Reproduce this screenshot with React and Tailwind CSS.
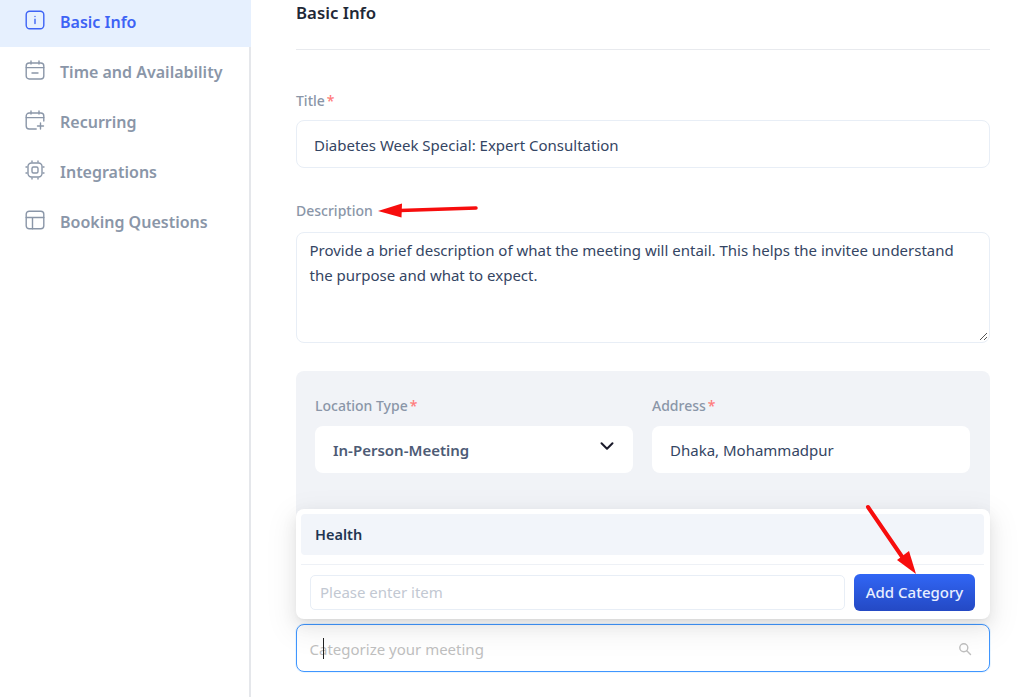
import React from 'react';
import { ChevronDown } from 'lucide-react';

const InfoIcon = () => (
  <svg width="20" height="20" viewBox="0 0 20 20" fill="none" stroke="currentColor" strokeWidth="1.4" strokeLinecap="round">
    <rect x="1.2" y="1.2" width="17.6" height="17.6" rx="3.5" />
    <path d="M10 9.2v4.4M10 6.4v.2" />
  </svg>
);

const CalendarMinusIcon = () => (
  <svg width="20" height="20" viewBox="0 0 20 20" fill="none" stroke="currentColor" strokeWidth="1.4" strokeLinecap="round">
    <rect x="1.2" y="3" width="17.6" height="16" rx="3" />
    <path d="M1.2 7.6h17.6M6 1v3M14 1v3M7 13h6" />
  </svg>
);

const CalendarPlusIcon = () => (
  <svg width="20" height="20" viewBox="0 0 20 20" fill="none" stroke="currentColor" strokeWidth="1.4" strokeLinecap="round">
    <path d="M18.8 11V6a3 3 0 0 0-3-3H4.200a3 3 0 0 0-3 3v10a3 3 0 0 0 3 3h7" />
    <path d="M1.200 7.600h17.600M6 1v3M14 1v3M15.500 13v6M12.500 16h6" />
  </svg>
);

const ChipIcon = () => (
  <svg width="20" height="20" viewBox="0 0 20 20" fill="none" stroke="currentColor" strokeWidth="1.4" strokeLinecap="round">
    <rect x="3" y="3" width="14" height="14" rx="3.5" />
    <rect x="7" y="7" width="6" height="6" rx="1.5" />
    <path d="M7 1v1M13 1v1M7 18v1M13 18v1M1 7h1M1 13h1M18 7h1M18 13h1" />
  </svg>
);

const LayoutIcon = () => (
  <svg width="20" height="20" viewBox="0 0 20 20" fill="none" stroke="currentColor" strokeWidth="1.4" strokeLinecap="round">
    <rect x="1.2" y="1.2" width="17.600" height="17.600" rx="3" />
    <path d="M1.200 7.500h17.600M7.500 7.500v11.300" />
  </svg>
);

const SearchIcon = () => (
  <svg width="14" height="14" viewBox="0 0 14 14" fill="none" stroke="#bfbfbf" strokeWidth="1.400" strokeLinecap="round">
    <circle cx="5.800" cy="5.800" r="4" />
    <path d="M8.800 8.800l3.700 3.700" />
  </svg>
);

const navItems = [
  { label: 'Basic Info', icon: InfoIcon, active: true },
  { label: 'Time and Availability', icon: CalendarMinusIcon },
  { label: 'Recurring', icon: CalendarPlusIcon },
  { label: 'Integrations', icon: ChipIcon },
  { label: 'Booking Questions', icon: LayoutIcon },
];

const Label = ({ text, required }) => (
  <div className="text-[14px] leading-[20px] font-medium text-[#8a96a8] flex items-center">
    {text}
    {required && <span className="text-[#ff7b7b] ml-[2px]">*</span>}
  </div>
);

const App = () => {
  return (
    <div className="relative h-[697px] w-[1024px] overflow-hidden bg-white flex font-['Noto_Sans',sans-serif]">
      <aside className="w-[251px] shrink-0 border-r-2 border-[#e5e7eb]">
        {navItems.map((item) => {
          const Icon = item.icon;
          return (
            <div
              key={item.label}
              className={
                item.active
                  ? 'h-[47px] pb-[3px] -mr-[2px] bg-[#e6f0fe] flex items-center text-[#3d63f5]'
                  : 'h-[50px] flex items-center text-[#8a96a8]'
              }
            >
              <div className="w-[60px] pl-[25px] -mt-[4px] shrink-0">
                <Icon />
              </div>
              <span className="text-[16px] font-semibold">{item.label}</span>
            </div>
          );
        })}
      </aside>

      <main className="flex-1 pl-[45px] pr-[34px]">
        <h2 className="text-[16.800px] leading-[26px] font-semibold text-[#1f2937] h-[49px]">Basic Info</h2>
        <div className="border-t border-[#e8eaee] pt-[41px]">
          <Label text="Title" required />
          <div className="mt-[9px] h-[48px] pt-[2px] rounded-[8px] border border-[#e8eef6] px-[17px] flex items-center text-[15px] text-[#344563]">
            Diabetes Week Special: Expert Consultation
          </div>

          <div className="mt-[33px]">
            <Label text="Description" />
          </div>
          <div className="relative mt-[11px] h-[111px] rounded-[8px] border border-[#e8eef6] pl-[12.500px] pr-[20px] pt-[5px] text-[15px] leading-[25px] text-[#344563]">
            Provide a brief description of what the meeting will entail. This helps the invitee understand the purpose and what to expect.
            <svg className="absolute right-[1px] bottom-[1px]" width="9" height="9" viewBox="0 0 9 9" stroke="#555" strokeWidth="1">
              <path d="M1 8l7-7M5 8l3-3" />
            </svg>
          </div>

          <div className="mt-[28px] h-[190px] rounded-[8px] bg-[#f1f3f7] px-[19px] pt-[25px] grid grid-cols-[318px_318px] gap-x-[19px] content-start">
            <div>
              <Label text="Location Type" required />
              <div className="mt-[10px] h-[47px] pt-[2px] rounded-[8px] bg-white px-[18px] flex items-center justify-between text-[15px] font-semibold text-[#4d5b75]">
                In-Person-Meeting
                <ChevronDown size={22} strokeWidth={2.200} className="text-[#1a1a2a] -mt-[9px] -mr-[3px]" />
              </div>
            </div>
            <div>
              <Label text="Address" required />
              <div className="mt-[10px] h-[47px] pt-[2px] rounded-[8px] bg-white px-[18px] flex items-center text-[15px] text-[#344563]">
                Dhaka, Mohammadpur
              </div>
            </div>
          </div>

          <div className="relative mt-[63px] h-[48px] pt-[2px] rounded-[8px] border border-[#4096ff] bg-white pl-[12.500px] pr-[17px] flex items-center justify-between text-[15px] text-[#bfbfbf] shadow-[0_0_0_1px_rgba(5,145,255,0.08)]">
            <span>Categorize your meeting</span>
            <SearchIcon />
            <span className="absolute left-[26px] top-[13px] w-px h-[21px] bg-[#222]" />
          </div>
        </div>

        <div className="absolute left-[296px] top-[509px] w-[694px] h-[110px] rounded-[8px] bg-white pt-[5px] pl-[5px] pr-[6px] shadow-[0_6px_16px_0_rgba(0,0,0,0.08),0_3px_6px_-4px_rgba(0,0,0,0.12),0_9px_28px_8px_rgba(0,0,0,0.05)]">
          <div className="h-[41px] rounded-[4px] bg-[#f2f5fa] px-[14px] flex items-center text-[14.500px] font-semibold text-[#1f3552]">
            Health
          </div>
          <div className="mt-[9px] border-t border-[#eef1f6] pt-[9px] pl-[9px] pr-[9px] flex gap-[9px]">
            <div className="mt-[1px] flex-1 h-[35px] rounded-[5px] border border-[#e8eef6] px-[9px] flex items-center text-[15px] text-[#c2c8d2]">
              Please enter item
            </div>
            <button className="w-[121px] h-[37px] rounded-[6px] bg-gradient-to-b from-[#3166f5] to-[#2449c4] text-[15px] font-medium text-[#e8efff]">
              Add Category
            </button>
          </div>
        </div>

        {/* red annotation arrows */}
        <svg className="absolute left-0 top-0 pointer-events-none" width="1024" height="697" viewBox="0 0 1024 697">
          <path d="M476 208 L400 210.500" stroke="#f70d0d" strokeWidth="3.500" strokeLinecap="round" fill="none" />
          <path d="M378 211 L402 203.500 L401.500 217.500 Z" fill="#f70d0d" />
          <path d="M868 507 L905 561" stroke="#f70d0d" strokeWidth="4" strokeLinecap="round" fill="none" />
          <path d="M916 574 L897 560 L909 551 Z" fill="#f70d0d" />
        </svg>
      </main>
    </div>
  );
};

export default App;
